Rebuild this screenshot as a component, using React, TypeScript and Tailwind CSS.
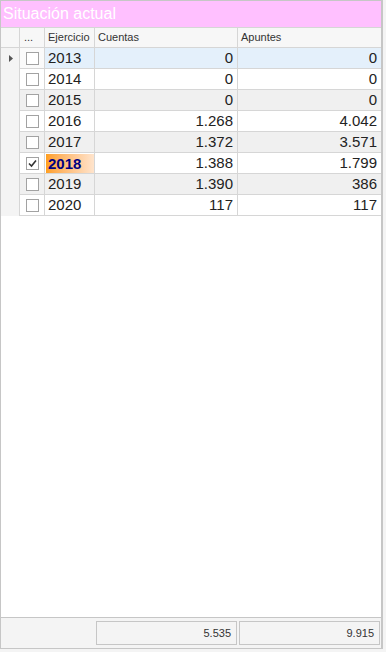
import React from "react";

type Row = { year: string; c: string; a: string; checked?: boolean };

const rows: Row[] = [
  { year: "2013", c: "0", a: "0" },
  { year: "2014", c: "0", a: "0" },
  { year: "2015", c: "0", a: "0" },
  { year: "2016", c: "1.268", a: "4.042" },
  { year: "2017", c: "1.372", a: "3.571" },
  { year: "2018", c: "1.388", a: "1.799", checked: true },
  { year: "2019", c: "1.390", a: "386" },
  { year: "2020", c: "117", a: "117" },
];

function Check({ checked }: { checked?: boolean }) {
  return (
    <div className="w-[13px] h-[13px] border border-[#a2a2a2] bg-white flex items-center justify-center">
      {checked && (
        <svg width="11" height="11" viewBox="0 0 11 11">
          <path d="M2 5.5 L4.5 8 L9 2.5" fill="none" stroke="#333" strokeWidth="1.6" />
        </svg>
      )}
    </div>
  );
}

export default function App() {
  return (
    <div
      className="w-[386px] h-[652px] bg-[#f4f4f4] flex items-start"
      style={{ fontFamily: '"Liberation Sans", Arial, sans-serif' }}
    >
      <div className="w-[383px] h-[649px] flex flex-col border-l border-t border-b border-r-2 border-[#c6c6c6] bg-white">
        <div className="h-[26px] bg-[#ffc0ff] text-white text-[16px] leading-[26px] pl-[2px] shrink-0">
          Situación actual
        </div>
        <div className="flex-1 flex flex-col">
          {/* header */}
          <div className="flex h-[21px] border-t border-b border-[#d6d6d6] bg-[#f7f7f7] text-[11px] text-[#333] leading-[19px] shrink-0">
            <div className="w-[19px] border-r border-[#d6d6d6]" />
            <div className="w-[25px] border-r border-[#d6d6d6] pl-[4px]">...</div>
            <div className="w-[50px] border-r border-[#d6d6d6] pl-[3px]">Ejercicio</div>
            <div className="w-[143px] border-r border-[#d6d6d6] pl-[3px]">Cuentas</div>
            <div className="w-[143px] pl-[3px]">Apuntes</div>
          </div>
          {rows.map((r, i) => {
            const focused = i === 0;
            const bg = focused ? "bg-[#e4f0fb]" : i % 2 === 0 ? "bg-[#f0f0f0]" : "bg-white";
            const chkBg = focused ? "bg-[#fafafa]" : i % 2 === 0 ? "bg-[#f0f0f0]" : "bg-white";
            return (
              <div key={r.year} className="flex h-[21px] text-[15px] text-[#222] leading-[20px]">
                <div className="w-[19px] border-r border-[#d6d6d6] bg-[#f4f4f4] flex items-center pl-[8px]">
                  {focused && (
                    <svg width="4" height="7" viewBox="0 0 4 7">
                      <path d="M0 0 L4 3.5 L0 7 Z" fill="#555" />
                    </svg>
                  )}
                </div>
                <div className={`w-[25px] border-r border-b border-[#d6d6d6] ${chkBg} flex items-center pl-[6px]`}>
                  <Check checked={r.checked} />
                </div>
                <div className={`w-[50px] border-r border-b border-[#d6d6d6] ${bg}`}>
                  {r.checked ? (
                    <div className="mt-[1px] ml-[1px] h-[19px] bg-gradient-to-r from-[#ff9f1c] to-[#ffe4cc] pl-[2px] font-bold text-[#000080] leading-[19px]">
                      {r.year}
                    </div>
                  ) : (
                    <div className="pl-[3px]">{r.year}</div>
                  )}
                </div>
                <div className={`w-[143px] border-r border-b border-[#d6d6d6] ${bg} text-right pr-[4px]`}>{r.c}</div>
                <div className={`w-[143px] border-b border-[#d6d6d6] ${bg} text-right pr-[4px]`}>{r.a}</div>
              </div>
            );
          })}
          <div className="flex-1" />
        </div>
        <div className="h-[31px] border-t border-[#c6c6c6] bg-[#f4f4f4] flex pt-[3px] shrink-0 text-[11px] text-[#333]">
          <div className="w-[94px]" />
          <div className="w-[143px] pl-[1px] pr-[1px]">
            <div className="h-[24px] border border-[#c6c6c6] text-right pr-[5px] leading-[22px]">5.535</div>
          </div>
          <div className="w-[143px] pl-[1px] pr-[1px]">
            <div className="h-[24px] border border-[#c6c6c6] text-right pr-[5px] leading-[22px]">9.915</div>
          </div>
        </div>
      </div>
    </div>
  );
}
